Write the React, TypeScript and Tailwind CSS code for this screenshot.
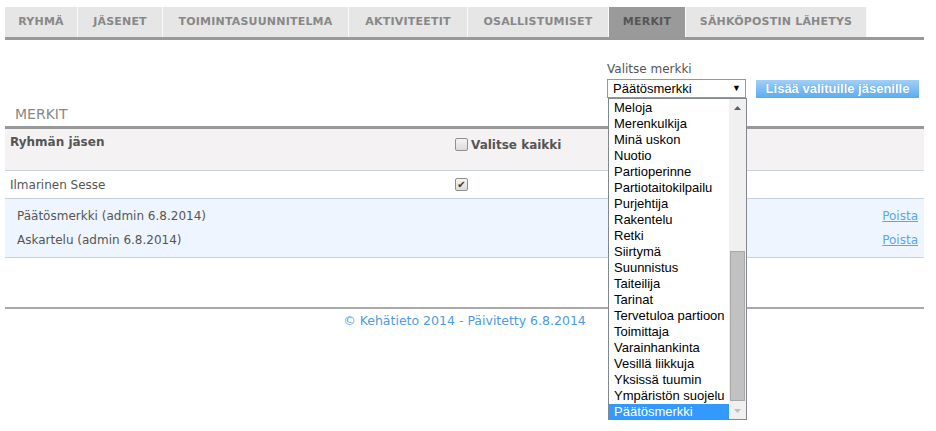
import React from "react";

const TABS = [
  { label: "Ryhmä", w: "w-[73px]" },
  { label: "Jäsenet", w: "w-[85px]" },
  { label: "Toimintasuunnitelma", w: "w-[186px]" },
  { label: "Aktiviteetit", w: "w-[119px]" },
  { label: "Osallistumiset", w: "w-[141px]" },
  { label: "Merkit", w: "w-[77px]" },
  { label: "Sähköpostin lähetys", w: "w-[181px]" },
];

const BADGES = [
  "Meloja",
  "Merenkulkija",
  "Minä uskon",
  "Nuotio",
  "Partioperinne",
  "Partiotaitokilpailu",
  "Purjehtija",
  "Rakentelu",
  "Retki",
  "Siirtymä",
  "Suunnistus",
  "Taiteilija",
  "Tarinat",
  "Tervetuloa partioon",
  "Toimittaja",
  "Varainhankinta",
  "Vesillä liikkuja",
  "Yksissä tuumin",
  "Ympäristön suojelu",
  "Päätösmerkki",
];

const verdana = "font-['DejaVu_Sans',Verdana,sans-serif]";
const arial = "font-['Liberation_Sans',Arial,sans-serif]";

function Checkbox({ checked }: { checked?: boolean }) {
  return (
    <span className="inline-flex h-[13px] w-[13px] items-center justify-center rounded-[2px] border border-[#8f8f8f] bg-gradient-to-b from-[#f4f4f4] to-[#dcdcdc] text-[10px] leading-none text-[#333]">
      {checked ? "✔" : null}
    </span>
  );
}

function Dropdown() {
  return (
    <div
      className={`absolute left-[608px] top-[98px] flex h-[322px] w-[139px] border border-[#828790] bg-white ${arial}`}
    >
      <ul className="flex-1 pt-px">
        {BADGES.map((b, i) => (
          <li
            key={b}
            className={`h-4 pl-[5px] text-[13px] leading-4 ${
              i === BADGES.length - 1 ? "bg-[#3399ff] text-white" : "text-black"
            }`}
          >
            {b}
          </li>
        ))}
      </ul>
      <div className="flex w-[17px] flex-col bg-[#f0f0f0]">
        <div className="flex h-[17px] items-center justify-center">
          <svg width="7" height="4" viewBox="0 0 7 4">
            <path d="M0 4 L3.5 0 L7 4 Z" fill="#606060" />
          </svg>
        </div>
        <div className="flex-1 pt-[135px] pb-px">
          <div className="mx-auto h-full w-[15px] border border-[#a8a8a8] bg-[#c1c1c1]" />
        </div>
        <div className="flex h-[17px] items-center justify-center">
          <svg width="7" height="4" viewBox="0 0 7 4">
            <path d="M0 0 L3.5 4 L7 0 Z" fill="#bfbfbf" />
          </svg>
        </div>
      </div>
    </div>
  );
}

export default function App() {
  return (
    <div className={`relative h-[431px] w-[936px] bg-white pt-[7px] pl-[5px] ${verdana}`}>
      <div className="w-[919px]">
        {/* tabs */}
        <div className="flex border-b-[3px] border-[#999]">
          {TABS.map((t) => (
            <div
              key={t.label}
              className={`flex h-[30px] ${t.w} items-center justify-center border-r border-[#fafafa] text-[11px] font-bold tracking-[0.2px] uppercase ${
                t.label === "Merkit" ? "bg-[#9a9a9a] text-[#555]" : "bg-[#e6e6e6] text-[#888]"
              }`}
            >
              {t.label}
            </div>
          ))}
        </div>

        {/* badge picker */}
        <div className="flex h-[58px] items-end justify-end gap-[10px] pr-[5px]">
          <div className="flex flex-col">
            <span className="mb-[3px] pl-0 text-[12px] leading-[14px] text-[#555]">
              Valitse merkki
            </span>
            <div
              className={`flex h-[19px] w-[139px] items-center justify-between border border-[#7f9db9] pr-[4px] pl-[5px] text-[13px] text-black ${arial}`}
            >
              <span>Päätösmerkki</span>
              <span className="text-[9px]">▼</span>
            </div>
          </div>
          <button
            className={`mb-0 h-[18px] w-[163px] bg-gradient-to-b from-[#9fd0fa] to-[#5aabf1] text-[13px] leading-[18px] font-bold text-white [text-shadow:0_0_1px_#4a8ccc] ${arial}`}
          >
            Lisää valituille jäsenille
          </button>
        </div>

        <h2 className="mt-[6px] pl-[10px] text-[14px] leading-[20px] text-[#888]">MERKIT</h2>

        {/* table */}
        <div className="mt-[2px] border-t-[3px] border-[#999]">
          <div className="flex h-[42px] border-b border-[#c9d3dc] bg-[#f4f2f2]">
            <div className="w-[450px] pt-[4px] pl-[5px] text-[12px] font-bold text-[#555]">
              Ryhmän jäsen
            </div>
            <div className="flex items-start gap-[3px] pt-[8px] text-[12px] font-bold text-[#555]">
              <span className="mt-[1px]">
                <Checkbox />
              </span>
              <span className="leading-[16px]">Valitse kaikki</span>
            </div>
          </div>
          <div className="flex h-[28px] items-center border-b border-[#c9d3dc]">
            <div className="w-[450px] pl-[5px] text-[12px] text-[#555]">Ilmarinen Sesse</div>
            <Checkbox checked />
          </div>
          <div className="flex flex-col gap-[8px] border-b border-[#c9d3dc] bg-[#eef5fe] pt-[9px] pb-[9px]">
            {["Päätösmerkki (admin 6.8.2014)", "Askartelu (admin 6.8.2014)"].map((r) => (
              <div key={r} className="flex h-[16px] items-center justify-between pr-[6px] pl-[12px] text-[12px] text-[#555]">
                <span>{r}</span>
                <a className="text-[#5aa7f0] underline">Poista</a>
              </div>
            ))}
          </div>
        </div>

        {/* footer */}
        <div className="mt-[49px] border-t-2 border-[#a9a9a9] pt-[3px] text-center text-[12.5px] text-[#4c9be6]">
          © Kehätieto 2014 - Päivitetty 6.8.2014
        </div>
      </div>

      <Dropdown />
    </div>
  );
}
